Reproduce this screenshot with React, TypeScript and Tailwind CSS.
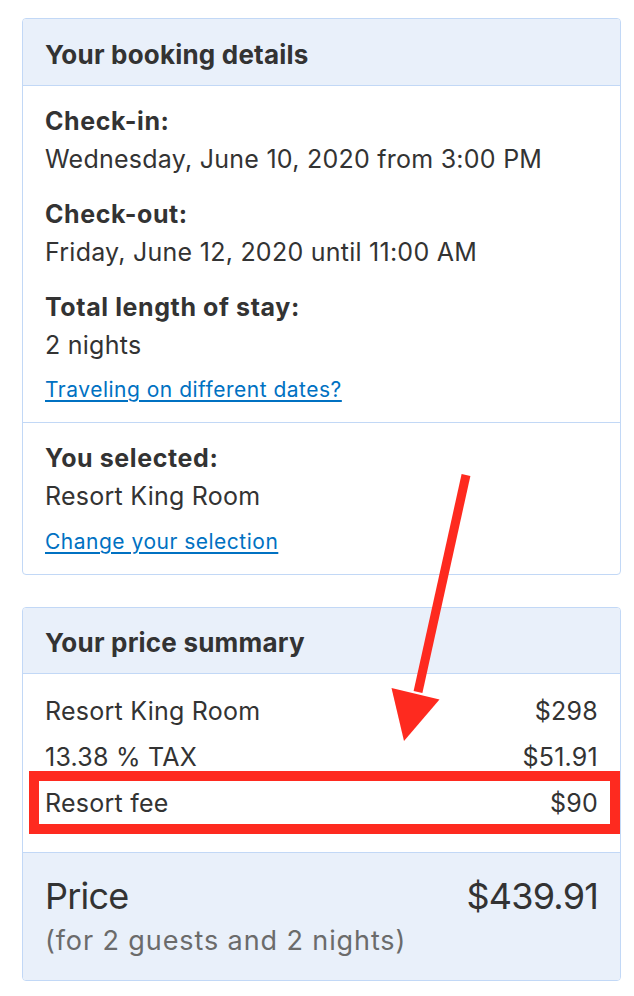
import React from "react";

const font = { fontFamily: "Inter, 'Liberation Sans', Arial, sans-serif" };

function Group({ label, value, mb }: { label: string; value: string; mb: string }) {
  return (
    <div className={mb}>
      <div className="font-bold leading-[38px] tracking-[0.6px]">{label}</div>
      <div className="leading-[38px]">{value}</div>
    </div>
  );
}

function Row({ label, value }: { label: string; value: string }) {
  return (
    <div className="flex justify-between leading-[46px] h-[46px]">
      <span>{label}</span>
      <span>{value}</span>
    </div>
  );
}

export default function App() {
  return (
    <div
      className="relative w-[634px] h-[996px] bg-white text-[#333333] text-[25px] tracking-[0.25px] pt-[18px]"
      style={font}
    >
      {/* Booking details card */}
      <div className="ml-[22px] w-[599px] border border-[#c2d8f6] rounded-[4px] overflow-hidden">
        <div className="h-[67px] bg-[#e9f0fa] border-b border-[#c2d8f6] flex items-center px-[22px] pt-[4px] font-bold text-[26px] tracking-[0.2px]">
          Your booking details
        </div>
        <div className="px-[22px] pt-[16px] pb-[17px] border-b border-[#c2d8f6]">
          <Group mb="mb-[17px]" label="Check-in:" value="Wednesday, June 10, 2020 from 3:00 PM" />
          <Group mb="mb-[17px]" label="Check-out:" value="Friday, June 12, 2020 until 11:00 AM" />
          <Group mb="mb-[11px]" label="Total length of stay:" value="2 nights" />
          <a className="block text-[21px] leading-[30px] tracking-[0.5px] text-[#0071c2] underline underline-offset-[3px]">
            Traveling on different dates?
          </a>
        </div>
        <div className="px-[22px] pt-[16px] pb-[17px]">
          <Group mb="mb-[12px]" label="You selected:" value="Resort King Room" />
          <a className="block text-[21px] leading-[30px] tracking-[0.5px] text-[#0071c2] underline underline-offset-[3px]">
            Change your selection
          </a>
        </div>
      </div>

      {/* Price summary card */}
      <div className="ml-[22px] mt-[32px] w-[599px] border border-[#c2d8f6] rounded-[4px] overflow-hidden">
        <div className="h-[66px] bg-[#e9f0fa] border-b border-[#c2d8f6] flex items-center px-[22px] pt-[3px] font-bold text-[26px] tracking-[0.2px]">
          Your price summary
        </div>
        <div className="px-[22px] pt-[14px] pb-[26px] bg-white">
          <Row label="Resort King Room" value="$298" />
          <Row label="13.38 % TAX" value="$51.91" />
          <div className="relative">
            <Row label="Resort fee" value="$90" />
            <div className="absolute top-[-9px] bottom-[-8px] left-[-16px] right-[-22px] border-[10px] border-[#fe2a1f]" />
          </div>
        </div>
        <div className="bg-[#e9f0fa] border-t border-[#c2d8f6] px-[22px] pt-[21px] pb-[21px]">
          <div className="flex justify-between text-[36px] leading-[44px] tracking-[-0.8px]">
            <span>Price</span>
            <span>$439.91</span>
          </div>
          <div className="mt-[5px] text-[27px] leading-[36px] tracking-[0.9px] text-[#6b6b6b]">
            (for 2 guests and 2 nights)
          </div>
        </div>
      </div>

      {/* Annotation arrow */}
      <svg
        className="absolute left-0 top-0 pointer-events-none"
        width="634"
        height="996"
        viewBox="0 0 634 996"
      >
        <line x1="466" y1="475" x2="418" y2="692" stroke="#fe2a1f" strokeWidth="9" />
        <polygon points="391.5,688 439.5,699.5 404,741" fill="#fe2a1f" />
      </svg>
    </div>
  );
}
